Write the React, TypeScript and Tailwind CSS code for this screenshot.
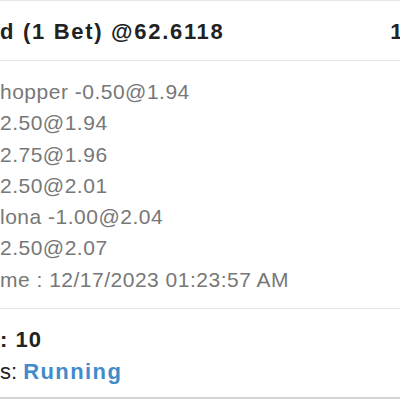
const lines = [
  "hopper -0.50@1.94",
  "2.50@1.94",
  "2.75@1.96",
  "2.50@2.01",
  "lona -1.00@2.04",
  "2.50@2.07",
  "me : 12/17/2023 01:23:57 AM",
];

export default function App() {
  return (
    <div className="w-[400px] h-[400px] overflow-hidden bg-white font-['Liberation_Sans',Arial,sans-serif]">
      <div className="w-[404px] border-t border-[#e6e6e6] border-b-2 border-b-[#d4d4d4] h-[399px] flex flex-col">
        <div className="h-[60px] flex items-center justify-between border-b border-[#e6e6e6] pt-[2px]">
          <span className="text-[22px] font-bold tracking-[1.7px] text-[#222]">d (1 Bet) @62.6118</span>
          <span className="text-[22px] font-bold tracking-[1.4px] text-[#222]">1</span>
        </div>
        <div className="pt-[15px] pb-[13px] flex flex-col border-b border-[#e6e6e6]">
          {lines.map((l) => (
            <div key={l} className="text-[21px] leading-[31.3px] tracking-[0.5px] text-[#777]">
              {l}
            </div>
          ))}
        </div>
        <div className="pt-[15px] flex flex-col">
          <div className="text-[22px] leading-[32px] text-[#222] font-bold tracking-[1px]">
            : 10
          </div>
          <div className="text-[22px] leading-[34px] text-[#222] -mt-[1px]">
            <span>s: </span>
            <span className="font-bold text-[#428bca] tracking-[1.4px]">Running</span>
          </div>
        </div>
      </div>
    </div>
  );
}
